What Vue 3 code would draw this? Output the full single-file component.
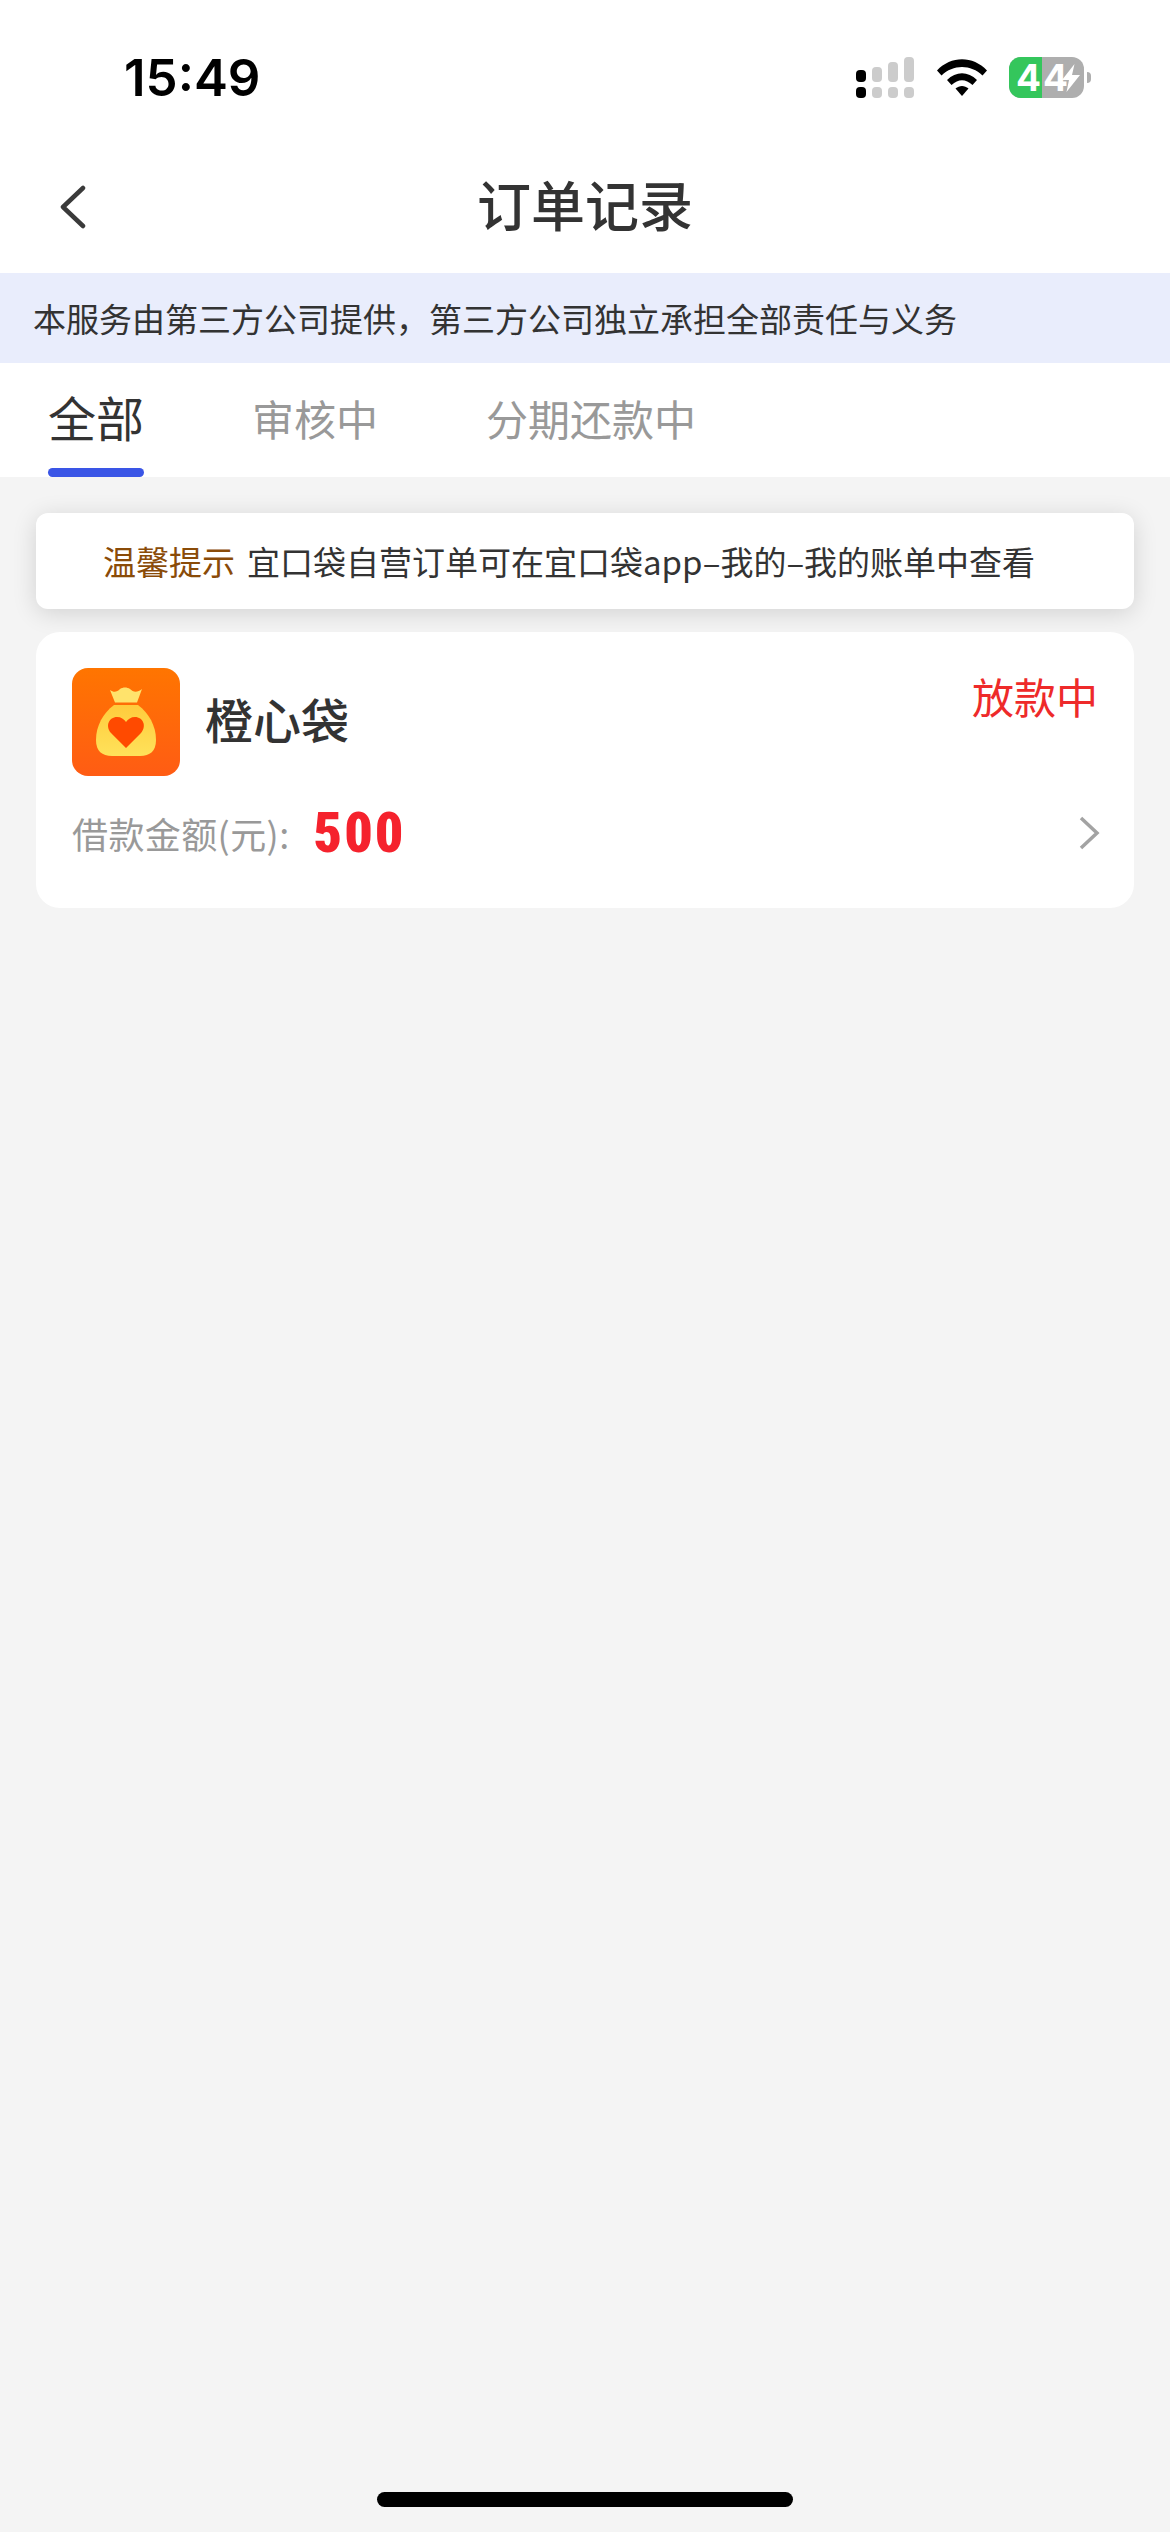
<template>
  <div class="page">
    <!-- Status bar -->
    <div class="status-bar">
      <span class="time">15:49</span>
      <div class="status-icons">
        <svg class="signal" width="58" height="41" viewBox="0 0 58 41">
          <rect x="0" y="13" width="10" height="12" rx="4" fill="#000" />
          <rect x="16" y="10" width="10" height="15" rx="4" fill="#ccc" />
          <rect x="32" y="5" width="10" height="20" rx="4" fill="#ccc" />
          <rect x="48" y="0" width="10" height="25" rx="4" fill="#ccc" />
          <rect x="0" y="30" width="10" height="11" rx="4" fill="#000" />
          <rect x="16" y="30" width="10" height="11" rx="4" fill="#ccc" />
          <rect x="32" y="30" width="10" height="11" rx="4" fill="#ccc" />
          <rect x="48" y="30" width="10" height="11" rx="4" fill="#ccc" />
        </svg>
        <svg class="wifi" width="50" height="37" viewBox="0 0 50 37">
          <path d="M0 11.500C14-3.500 36-3.500 50 11.500L45.500 16.500C34 5 16 5 4.500 16.500Z" fill="#000" />
          <path d="M10 21C19 12 31 12 40 21L35.500 26C28.500 19.500 21.500 19.500 14.500 26Z" fill="#000" />
          <path d="M18.500 29.500C22.500 26 27.500 26 31.500 29.500L25 37Z" fill="#000" />
        </svg>
        <div class="battery">
          <div class="battery-body">
            <span class="battery-fill"></span>
            <span class="battery-num">4</span>
            <span class="battery-num second">4</span>
            <svg class="bolt" width="18" height="28" viewBox="0 0 18 28">
              <path d="M12.500 0L0 16H7L4.500 28L18 11H10Z" fill="#fff" />
            </svg>
          </div>
          <span class="battery-nub"></span>
        </div>
      </div>
    </div>

    <!-- Nav -->
    <div class="nav">
      <svg class="back" width="26" height="44" viewBox="0 0 26 44">
        <path d="M23 3L3 22L23 41" fill="none" stroke="#3a3a3a" stroke-width="4.500" stroke-linecap="round" stroke-linejoin="round" />
      </svg>
      <span class="nav-title">订单记录</span>
    </div>

    <div class="notice">本服务由第三方公司提供，第三方公司独立承担全部责任与义务</div>

    <!-- Tabs -->
    <div class="tabs">
      <div
        v-for="tab in tabs"
        :key="tab"
        :class="['tab', tab === activeTab ? 'active' : '']"
      >
        {{ tab }}
      </div>
    </div>

    <div class="content">
      <div class="tip">
        <span class="tip-label">温馨提示</span>
        <span class="tip-text">宜口袋自营订单可在宜口袋app–我的–我的账单中查看</span>
      </div>

      <div class="order">
        <div class="order-head">
          <div class="order-brand">
            <svg class="logo" width="108" height="108" viewBox="0 0 108 108">
              <defs>
                <linearGradient id="logoBg" x1="0" y1="0" x2="0" y2="1">
                  <stop offset="0" stop-color="#ff7500" />
                  <stop offset="1" stop-color="#ff5c14" />
                </linearGradient>
                <linearGradient id="bagFill" x1="0" y1="0" x2="0" y2="1">
                  <stop offset="0" stop-color="#ffcb3c" />
                  <stop offset="1" stop-color="#ffe25a" />
                </linearGradient>
              </defs>
              <rect width="108" height="108" rx="16" fill="url(#logoBg)" />
              <path d="M38 22C42 25 45 24 48 21C51 19 55 19 58 21C61 24 65 25 70 21L65 34.500H43Z" fill="#ffe36c" />
              <path d="M42 37H66C77 45 84 58 84 72C84 83 78 88 68 88H40C30 88 24 83 24 72C24 58 31 45 42 37Z" fill="url(#bagFill)" />
              <path d="M54 80L39 65C33 58 37 49 45 49C49 49 52 51 54 54C56 51 59 49 63 49C71 49 75 58 69 65Z" fill="#ff4a00" />
            </svg>
            <span class="brand-name">橙心袋</span>
          </div>
          <span class="order-status">放款中</span>
        </div>
        <div class="order-row">
          <span class="amount-label">借款金额(元):</span>
          <span class="amount">500</span>
          <svg class="chevron" width="22" height="34" viewBox="0 0 22 34">
            <path d="M3 2L19 17L3 32" fill="none" stroke="#a3a3a3" stroke-width="3.500" />
          </svg>
        </div>
      </div>

      <div class="home-bar"></div>
    </div>
  </div>
</template>

<script setup>
const tabs = ['全部', '审核中', '分期还款中'];
const activeTab = '全部';
</script>

<style>
html, body { background: #f4f4f4; }
</style>

<style scoped>
.page {
  width: 1170px;
  height: 2532px;
  display: flex;
  flex-direction: column;
  background: #f4f4f4;
  font-family: "Noto Sans CJK SC", "Noto Sans", sans-serif;
  color: #333;
  overflow: hidden;
}

.status-bar {
  height: 150px;
  flex: none;
  box-sizing: border-box;
  background: #fff;
  display: flex;
  justify-content: space-between;
  align-items: flex-start;
  padding: 57px 79px 0 124px;
}
.time {
  font-family: Inter, sans-serif;
  font-size: 51px;
  font-weight: 600;
  line-height: 42px;
  color: #000;
}
.status-icons {
  display: flex;
  align-items: flex-start;
  width: 235px;
}
.signal { flex: none; }
.wifi { flex: none; margin: 2px 0 0 23px; }
.battery {
  margin-left: 22px;
  display: flex;
  align-items: center;
  flex: none;
}
.battery-body {
  position: relative;
  width: 75px;
  height: 41px;
  border-radius: 12px;
  background: #aeaeae;
  display: flex;
  align-items: center;
  font-family: Inter, sans-serif;
  font-size: 37px;
  font-weight: 700;
  line-height: 41px;
  color: #fff;
}
.battery-fill {
  position: absolute;
  left: 0;
  top: 0;
  bottom: 0;
  width: 33px;
  border-radius: 12px 0 0 12px;
  background: #34c65c;
}
.battery-num { position: relative; margin-left: 7px; width: 22px; }
.battery-num.second { margin-left: 5px; width: 20px; }
.bolt { position: relative; margin-left: -1px; flex: none; }
.battery-nub {
  width: 4px;
  height: 11px;
  margin-left: 3px;
  border-radius: 0 6px 6px 0;
  background: #aeaeae;
}

.nav {
  position: relative;
  height: 123px;
  flex: none;
  background: #fff;
  display: flex;
  align-items: center;
  justify-content: center;
}
.back {
  position: absolute;
  left: 60px;
  top: 35px;
}
.nav-title {
  font-size: 54px;
  font-weight: 500;
  line-height: 70px;
  margin-top: -16px;
  color: #333;
}

.notice {
  height: 90px;
  flex: none;
  box-sizing: border-box;
  padding-left: 33px;
  background: #e9edfc;
  font-size: 33px;
  line-height: 90px;
  color: #333;
}

.tabs {
  height: 114px;
  flex: none;
  box-sizing: border-box;
  padding-left: 48px;
  background: #fff;
  display: flex;
  gap: 108px;
}
.tab {
  position: relative;
  font-size: 42px;
  line-height: 110px;
  color: #999;
}
.tab.active {
  font-size: 48px;
  line-height: 106px;
  color: #333;
}
.tab.active::after {
  content: "";
  position: absolute;
  left: 0;
  right: 0;
  top: 105px;
  height: 9px;
  border-radius: 5px;
  background: #3a55e6;
}

.content {
  flex: 1;
  display: flex;
  flex-direction: column;
  padding: 36px 36px 25px;
}

.tip {
  height: 96px;
  flex: none;
  box-sizing: border-box;
  padding-left: 67px;
  background: #fff;
  border-radius: 12px;
  box-shadow: 0 4px 24px rgba(0, 0, 0, 0.14);
  display: flex;
  align-items: center;
  gap: 12px;
  font-size: 33px;
}
.tip-label { color: #8a4b08; }
.tip-text { color: #333; }

.order {
  margin-top: 23px;
  height: 276px;
  flex: none;
  box-sizing: border-box;
  padding: 36px 36px 0;
  background: #fff;
  border-radius: 24px;
}
.order-head {
  display: flex;
  justify-content: space-between;
  align-items: flex-start;
}
.order-brand {
  display: flex;
  align-items: center;
  gap: 25px;
}
.logo { flex: none; }
.brand-name {
  font-size: 48px;
  font-weight: 500;
  line-height: 60px;
  margin-top: -8px;
  color: #333;
}
.order-status {
  font-size: 42px;
  line-height: 50px;
  margin-top: 3px;
  color: #ee2a2a;
}
.order-row {
  margin-top: 27px;
  display: flex;
  align-items: center;
  height: 60px;
}
.amount-label {
  font-size: 36px;
  letter-spacing: 0.4px;
  color: #999;
}
.amount {
  margin-left: 24px;
  font-family: Roboto, sans-serif;
  font-size: 56px;
  font-weight: 900;
  font-stretch: 85%;
  letter-spacing: 2px;
  color: #f5222d;
}
.chevron {
  margin-left: auto;
  margin-right: -2px;
  flex: none;
}

.home-bar {
  margin: auto auto 0;
  width: 416px;
  height: 15px;
  border-radius: 8px;
  background: #000;
}
</style>
